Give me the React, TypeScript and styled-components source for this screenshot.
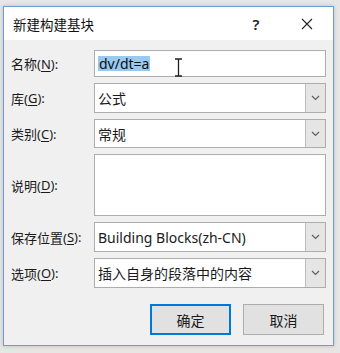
import React from "react";
import styled, { createGlobalStyle } from "styled-components";

const Global = createGlobalStyle`
  html, body { margin: 0; padding: 0; }
  body {
    background: #e6e6e6;
    width: 340px;
    height: 353px;
    overflow: hidden;
    font-family: "Noto Sans", "Noto Sans CJK SC", sans-serif;
  }
  #root { padding: 6px 0 0 3px; }
`;

const Window = styled.div`
  width: 331px;
  height: 340px;
  box-sizing: border-box;
  border: 1px solid #6f9ad8;
  background: #f0f0f0;
  display: flex;
  flex-direction: column;
  box-shadow: 0 0 4px rgba(0, 0, 0, 0.18);
`;

const TitleBar = styled.div`
  height: 33px;
  background: #ffffff;
  display: flex;
  align-items: center;
  padding: 0 6px 0 9px;
`;

const Title = styled.div`
  flex: 1;
  font-size: 13.5px;
  color: #111;
  font-family: "Noto Sans CJK SC", sans-serif;
`;

const TitleButton = styled.div<{ $w: number; $gap?: number }>`
  width: ${(p) => p.$w}px;
  margin-right: ${(p) => p.$gap ?? 0}px;
  height: 33px;
  display: flex;
  align-items: center;
  justify-content: center;
  font-size: 15px;
  font-weight: 600;
  color: #222;
`;

const Body = styled.div`
  flex: 1;
  padding: 10px 7px 0 7px;
  display: flex;
  flex-direction: column;
`;

const Form = styled.div`
  display: grid;
  grid-template-columns: 83px 1fr;
  row-gap: 6px;
`;

const Label = styled.label`
  display: flex;
  align-items: center;
  font-size: 13px;
  color: #1a1a1a;
  white-space: nowrap;
  u { text-decoration: underline; text-underline-offset: 2px; }
`;

const FieldBox = styled.div<{ $h: number }>`
  position: relative;
  height: ${(p) => p.$h}px;
  box-sizing: border-box;
  border: 1px solid #adadad;
  background: #ffffff;
  display: flex;
  align-items: center;
`;

const FieldText = styled.div`
  flex: 1;
  padding-left: 3px;
  font-size: 14px;
  color: #1a1a1a;
  white-space: nowrap;
`;

const Selected = styled.span`
  background: #99c9ef;
  color: #0f0f0f;
  padding: 0 1px;
  line-height: 15px;
  display: inline-block;
`;

const ArrowButton = styled.div`
  width: 19px;
  align-self: stretch;
  background: #e5e5e5;
  border-left: 1px solid #bdbdbd;
  display: flex;
  align-items: center;
  justify-content: center;
`;

const Beam = styled.svg`
  position: absolute;
  left: 79px;
  top: 7px;
`;

const ButtonRow = styled.div`
  display: flex;
  justify-content: flex-end;
  gap: 12px;
  margin-top: 16px;
  padding-right: 2px;
`;

const DialogButton = styled.div<{ $default?: boolean }>`
  width: 81px;
  height: 31px;
  box-sizing: border-box;
  background: #e1e1e1;
  border: ${(p) => (p.$default ? "2px solid #0078d7" : "1px solid #adadad")};
  display: flex;
  align-items: center;
  justify-content: center;
  font-size: 14px;
  color: #1a1a1a;
`;

const Chevron = () => (
  <svg width="9" height="6" viewBox="0 0 9 6">
    <path d="M1 1 L4.5 4.5 L8 1" fill="none" stroke="#606060" strokeWidth="1.2" />
  </svg>
);

const Combo = ({ h, text }: { h: number; text: string }) => (
  <FieldBox $h={h}>
    <FieldText>{text}</FieldText>
    <ArrowButton>
      <Chevron />
    </ArrowButton>
  </FieldBox>
);

export default function App() {
  return (
    <>
      <Global />
      <Window>
        <TitleBar>
          <Title>新建构建基块</Title>
          <TitleButton $w={22} $gap={20}>?</TitleButton>
          <TitleButton $w={40}>
            <svg width="12" height="12" viewBox="0 0 12 12">
              <path d="M1 1 L11 11 M11 1 L1 11" stroke="#222" strokeWidth="1.1" />
            </svg>
          </TitleButton>
        </TitleBar>
        <Body>
          <Form>
            <Label>
              名称(<u>N</u>):
            </Label>
            <FieldBox $h={27}>
              <FieldText>
                <Selected>dv/dt=a</Selected>
              </FieldText>
              <Beam width="9" height="19" viewBox="0 0 9 19">
                <path d="M1 1 H8 M4.5 1 V18 M1 18 H8" stroke="#222" strokeWidth="1.3" fill="none" />
              </Beam>
            </FieldBox>

            <Label>
              库(<u>G</u>):
            </Label>
            <Combo h={30} text="公式" />

            <Label>
              类别(<u>C</u>):
            </Label>
            <Combo h={29} text="常规" />

            <Label>
              说明(<u>D</u>):
            </Label>
            <FieldBox $h={62} />

            <Label>
              保存位置(<u>S</u>):
            </Label>
            <Combo h={30} text="Building Blocks(zh-CN)" />

            <Label>
              选项(<u>O</u>):
            </Label>
            <Combo h={30} text="插入自身的段落中的内容" />
          </Form>
          <ButtonRow>
            <DialogButton $default>确定</DialogButton>
            <DialogButton>取消</DialogButton>
          </ButtonRow>
        </Body>
      </Window>
    </>
  );
}
